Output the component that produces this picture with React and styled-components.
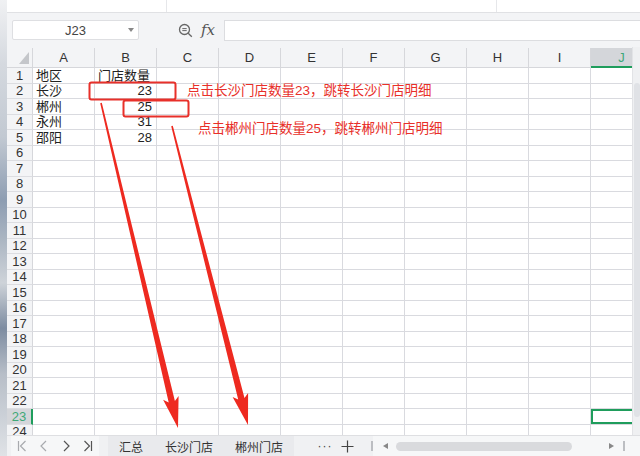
import styled, { createGlobalStyle } from "styled-components";

const GlobalStyle = createGlobalStyle`
  * { box-sizing: border-box; }
  body {
    margin: 0;
    background: #fff;
    font-family: "Liberation Sans", "Noto Sans CJK SC", sans-serif;
  }
`;

const GREEN = "#1f9d5c";
const RED = "#e8302a";
const COLS = ["A", "B", "C", "D", "E", "F", "G", "H", "I", "J"];
const DATA = [
  ["地区", "门店数量"],
  ["长沙", 23],
  ["郴州", 25],
  ["永州", 31],
  ["邵阳", 28],
];
const ROW_COUNT = 24;
const ACTIVE_ROW = 23;
const ACTIVE_COL = "J";

// tapered arrow, thin at the tail and wide at the head
const arrowPoints = (x1, y1, x2, y2, w1, w2, headLen, headW) => {
  const L = Math.hypot(x2 - x1, y2 - y1);
  const ux = (x2 - x1) / L;
  const uy = (y2 - y1) / L;
  const nx = -uy;
  const ny = ux;
  const bx = x2 - ux * headLen;
  const by = y2 - uy * headLen;
  const pts = [
    [x1 + nx * w1, y1 + ny * w1],
    [bx + nx * w2, by + ny * w2],
    [bx - ux * 4 + nx * headW, by - uy * 4 + ny * headW],
    [x2, y2],
    [bx - ux * 4 - nx * headW, by - uy * 4 - ny * headW],
    [bx - nx * w2, by - ny * w2],
    [x1 - nx * w1, y1 - ny * w1],
  ];
  return pts.map((p) => p.map((v) => v.toFixed(1)).join(",")).join(" ");
};

const App = () => {
  return (
    <Page>
      <GlobalStyle />
      <LeftStrip />
      <Main>
        <TopStrip>
          <TopCell $w={160} />
          <TopCell $w={330} />
        </TopStrip>
        <Toolbar>
          <NameBox>
            <span>J23</span>
            <svg width="6" height="4" viewBox="0 0 6 4">
              <path d="M0 0 L6 0 L3 4 Z" fill="#888" />
            </svg>
          </NameBox>
          <ToolIcon>
            <svg width="15" height="15" viewBox="0 0 15 15" fill="none" stroke="#666" strokeWidth="1.3">
              <circle cx="6.5" cy="6.5" r="5" />
              <path d="M10.2 10.2 L13.8 13.8" />
              <path d="M4.3 5.6 H8.7 M4.3 7.6 H8.7" strokeWidth="1" />
            </svg>
          </ToolIcon>
          <Fx>fx</Fx>
          <FormulaInput />
        </Toolbar>
        <Sheet>
          <GridWrap>
            <Row $h={20}>
              <Corner />
              {COLS.map((c) => (
                <ColHead key={c} $active={c === ACTIVE_COL}>
                  {c}
                </ColHead>
              ))}
            </Row>
            {Array.from({ length: ROW_COUNT }, (_, i) => {
              const r = i + 1;
              const data = DATA[i] || [];
              return (
                <Row key={r} $h={15.5}>
                  <RowHead $active={r === ACTIVE_ROW}>{r}</RowHead>
                  {COLS.map((c, ci) => {
                    const v = data[ci];
                    return (
                      <Cell
                        key={c}
                        $right={typeof v === "number"}
                        $selected={r === ACTIVE_ROW && c === ACTIVE_COL}
                      >
                        {v}
                      </Cell>
                    );
                  })}
                </Row>
              );
            })}
          </GridWrap>
          <VScroll>
            <VThumb />
          </VScroll>
        </Sheet>
        <TabBar>
          <NavGroup>
            <NavBtn $dim>
              <svg width="10" height="12" viewBox="0 0 10 12" fill="none" stroke="currentColor" strokeWidth="1.2">
                <path d="M1.5 1 V11 M8.5 1 L3.5 6 L8.5 11" />
              </svg>
            </NavBtn>
            <NavBtn $dim>
              <svg width="10" height="12" viewBox="0 0 10 12" fill="none" stroke="currentColor" strokeWidth="1.2">
                <path d="M7 1 L2 6 L7 11" />
              </svg>
            </NavBtn>
            <NavBtn>
              <svg width="10" height="12" viewBox="0 0 10 12" fill="none" stroke="currentColor" strokeWidth="1.2">
                <path d="M3 1 L8 6 L3 11" />
              </svg>
            </NavBtn>
            <NavBtn>
              <svg width="10" height="12" viewBox="0 0 10 12" fill="none" stroke="currentColor" strokeWidth="1.2">
                <path d="M1.5 1 L6.5 6 L1.5 11 M8.5 1 V11" />
              </svg>
            </NavBtn>
          </NavGroup>
          <Tabs>
            <Tab>汇总</Tab>
            <Tab>长沙门店</Tab>
            <Tab>郴州门店</Tab>
          </Tabs>
          <MoreBtn $gap={20}>···</MoreBtn>
          <MoreBtn>
            <svg width="13" height="13" viewBox="0 0 13 13" stroke="#444" strokeWidth="1.2">
              <path d="M6.5 0.5 V12.5 M0.5 6.5 H12.5" />
            </svg>
          </MoreBtn>
          <BarMark />
          <HScroll>
            <svg width="5" height="6" viewBox="0 0 5 6">
              <path d="M5 0 L0 3 L5 6 Z" fill="#888" />
            </svg>
            <HThumb />
            <Spacer />
            <svg width="5" height="6" viewBox="0 0 5 6">
              <path d="M0 0 L5 3 L0 6 Z" fill="#888" />
            </svg>
            <BarMark $end />
          </HScroll>
        </TabBar>
      </Main>

      <Overlay width="640" height="456" viewBox="0 0 640 456">
        <rect x="89.5" y="82.5" width="86" height="17" rx="2" fill="none" stroke={RED} strokeWidth="2" />
        <rect x="123.5" y="100.5" width="65" height="16" rx="2" fill="none" stroke={RED} strokeWidth="2" />
        <polygon points={arrowPoints(101, 103, 178, 428, 0.8, 3.2, 27, 8)} fill="#ee2a20" />
        <polygon points={arrowPoints(172, 126, 248, 425, 0.8, 3.2, 27, 8)} fill="#ee2a20" />
      </Overlay>
      <Note $x={187} $y={83}>点击长沙门店数量23，跳转长沙门店明细</Note>
      <Note $x={198} $y={121}>点击郴州门店数量25，跳转郴州门店明细</Note>
    </Page>
  );
};

const Page = styled.div`
  position: relative;
  width: 640px;
  height: 456px;
  display: flex;
  overflow: hidden;
  background: #fff;
  color: #222;
`;

const LeftStrip = styled.div`
  width: 7px;
  flex-shrink: 0;
  background: linear-gradient(
    180deg,
    #f0f1f3 0%,
    #d5d9df 14%,
    #c2c9d2 30%,
    #8d9db2 44%,
    #a9b4c1 52%,
    #ced3d9 62%,
    #7d8ca1 72%,
    #b7bec8 82%,
    #dfe2e6 100%
  );
`;

const Main = styled.div`
  flex: 1;
  min-width: 0;
  display: flex;
  flex-direction: column;
`;

const TopStrip = styled.div`
  height: 13px;
  display: flex;
  background: #fff;
  border-bottom: 1px solid #e0e1e4;
`;

const TopCell = styled.div`
  width: ${(p) => p.$w}px;
  border-right: 1px solid #e6e7ea;
`;

const Toolbar = styled.div`
  height: 34px;
  display: flex;
  align-items: center;
  padding-left: 5px;
  background: #f3f4f6;
`;

const NameBox = styled.div`
  width: 127px;
  height: 20px;
  display: flex;
  align-items: center;
  justify-content: space-between;
  padding: 0 4px 0 52px;
  background: #fff;
  border: 1px solid #dedfe2;
  border-radius: 2px;
  font-size: 13px;
  color: #444;
`;

const ToolIcon = styled.div`
  display: flex;
  margin-left: 39px;
`;

const Fx = styled.span`
  margin-left: 8px;
  font-family: "DejaVu Serif", "Liberation Serif", serif;
  font-style: italic;
  font-size: 15px;
  color: #555;
  line-height: 1;
`;

const FormulaInput = styled.div`
  flex: 1;
  height: 21px;
  margin-left: 9px;
  background: #fff;
  border: 1px solid #dcdde0;
  border-right: none;
`;

const Sheet = styled.div`
  flex: 1;
  min-height: 0;
  display: flex;
  background: #fff;
`;

const GridWrap = styled.div`
  flex: 1;
  min-width: 0;
  overflow: hidden;
  padding-top: 1px;
  background: #f3f4f6;
`;

const Row = styled.div`
  display: flex;
  height: ${(p) => p.$h}px;
`;

const Corner = styled.div`
  position: relative;
  width: 26px;
  flex-shrink: 0;
  background: #f3f4f6;
  border-right: 1px solid #d6d7db;
  border-bottom: 1px solid #d6d7db;
  &::after {
    content: "";
    position: absolute;
    right: 3px;
    bottom: 3px;
    width: 10px;
    height: 12px;
    background: #c4c6ca;
    clip-path: polygon(100% 0, 100% 100%, 0 100%);
  }
`;

const ColHead = styled.div`
  width: 62px;
  flex-shrink: 0;
  display: flex;
  align-items: center;
  justify-content: center;
  font-size: 13px;
  color: ${(p) => (p.$active ? "#3fa878" : "#333")};
  background: ${(p) => (p.$active ? "#d4d6da" : "#f3f4f6")};
  border-right: 1px solid #d6d7db;
  border-bottom: ${(p) => (p.$active ? `2px solid ${GREEN}` : "1px solid #d6d7db")};
`;

const RowHead = styled.div`
  width: 26px;
  flex-shrink: 0;
  display: flex;
  align-items: center;
  justify-content: center;
  overflow: hidden;
  font-size: 13px;
  line-height: 1;
  color: ${(p) => (p.$active ? "#3fa878" : "#333")};
  background: ${(p) => (p.$active ? "#d4d6da" : "#f3f4f6")};
  border-right: ${(p) => (p.$active ? `2px solid ${GREEN}` : "1px solid #d6d7db")};
  border-bottom: 1px solid #dcdde1;
`;

const Cell = styled.div`
  width: 62px;
  flex-shrink: 0;
  display: flex;
  align-items: center;
  justify-content: ${(p) => (p.$right ? "flex-end" : "flex-start")};
  overflow: hidden;
  padding: 0 4px 0 3px;
  font-size: 13px;
  line-height: 1;
  white-space: nowrap;
  color: #222;
  background: #fff;
  border-right: 1px solid #d9dadf;
  border-bottom: 1px solid #d9dadf;
  box-shadow: ${(p) => (p.$selected ? `inset 0 0 0 2px ${GREEN}` : "none")};
`;

const VScroll = styled.div`
  width: 8px;
  flex-shrink: 0;
  padding-top: 36px;
  background: #eff0f2;
  border-left: 1px solid #e2e3e6;
`;

const VThumb = styled.div`
  width: 6px;
  height: 334px;
  margin-left: 0.5px;
  background: #e0e2e6;
  border-radius: 3px;
`;

const TabBar = styled.div`
  height: 21px;
  flex-shrink: 0;
  display: flex;
  align-items: center;
  background: #f0f1f3;
  border-top: 1px solid #dedfe2;
`;

const NavGroup = styled.div`
  display: flex;
  height: 100%;
  margin-left: 4px;
  background: #f6f7f8;
`;

const NavBtn = styled.div`
  width: 22px;
  display: flex;
  align-items: center;
  justify-content: center;
  color: ${(p) => (p.$dim ? "#a8aaae" : "#555")};
`;

const Tabs = styled.div`
  display: flex;
  height: 100%;
  margin-left: 9px;
  background: #e9eaed;
`;

const Tab = styled.div`
  display: flex;
  align-items: center;
  padding: 0 11px;
  font-size: 12px;
  color: #333;
`;

const MoreBtn = styled.div`
  width: 22px;
  display: flex;
  align-items: center;
  justify-content: center;
  font-size: 12px;
  letter-spacing: 1px;
  color: #444;
  margin-left: ${(p) => p.$gap || 0}px;
`;

const BarMark = styled.div`
  width: 2px;
  height: 10px;
  margin-left: ${(p) => (p.$end ? "9px" : "13px")};
  background: #bcbec2;
`;

const HScroll = styled.div`
  flex: 1;
  height: 100%;
  display: flex;
  align-items: center;
  padding: 0 15px 0 10px;
  background: #f6f7f8;
`;

const HThumb = styled.div`
  width: 176px;
  height: 9px;
  margin-left: 8px;
  background: #d9dadd;
  border-radius: 5px;
`;

const Spacer = styled.div`
  flex: 1;
`;

const Overlay = styled.svg`
  position: absolute;
  left: 0;
  top: 0;
  pointer-events: none;
`;

const Note = styled.div`
  position: absolute;
  left: ${(p) => p.$x}px;
  top: ${(p) => p.$y}px;
  font-size: 13.5px;
  line-height: 16px;
  color: ${RED};
  white-space: nowrap;
`;

export default App;
